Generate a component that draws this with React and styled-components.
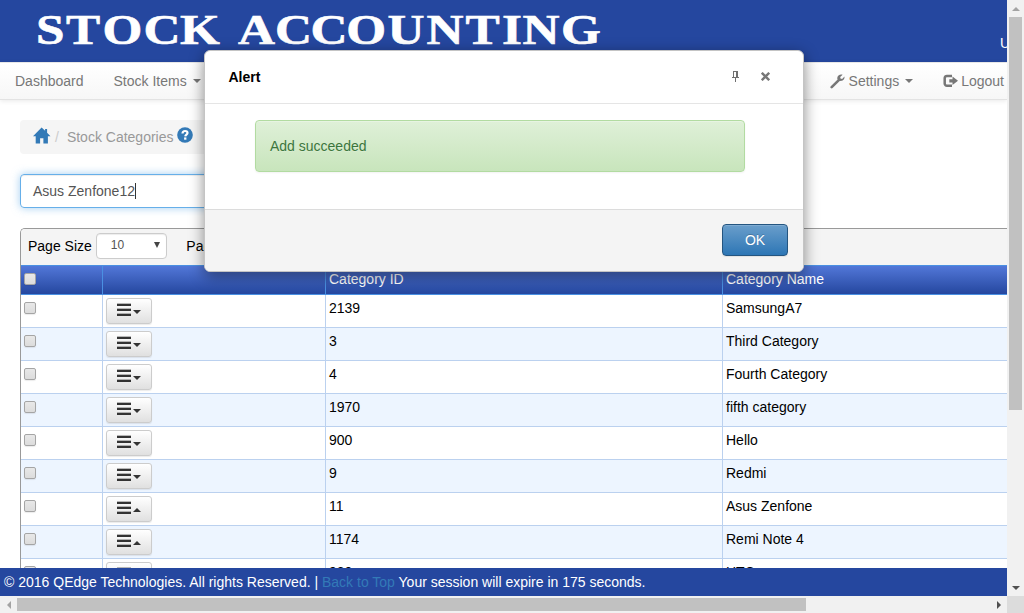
import React from "react";
import styled, { createGlobalStyle, css } from "styled-components";

const GlobalStyle = createGlobalStyle`
  * { box-sizing: border-box; }
  body { margin: 0; overflow: hidden; background: #fff; }
`;

const Screen = styled.div`
  position: relative;
  display: grid;
  grid-template-columns: 1007px 17px;
  grid-template-rows: 596px 17px;
  width: 1024px;
  height: 613px;
  overflow: hidden;
  font: 14px/20px "Liberation Sans", Arial, sans-serif;
  color: #000;
`;

const Page = styled.div`
  display: flex;
  flex-direction: column;
  min-width: 0;
  height: 596px;
  overflow: hidden;
  background: #fff;
`;

const Banner = styled.header`
  display: flex;
  justify-content: space-between;
  flex: none;
  height: 62px;
  background: #25479f;
  color: #fff;
`;

const Logo = styled.svg`
  display: block;
  flex: none;
  font: bold 42px "Liberation Serif", serif;
  fill: #fff;
  stroke: #fff;
  stroke-width: 0.6px;
`;

const UserLabel = styled.span`
  width: 7px;
  padding-top: 33px;
  overflow: hidden;
  white-space: nowrap;
`;

const Nav = styled.nav`
  display: flex;
  justify-content: space-between;
  flex: none;
  height: 38px;
  padding: 0 3px 0 15px;
  border-top: 1px solid #e7e7e7;
  border-bottom: 1px solid #e3e3e3;
  background: linear-gradient(#fff, #f7f7f7);
  box-shadow: 0 1px 5px rgba(0, 0, 0, 0.09);
  color: #777;
`;

const NavGroup = styled.div`
  display: flex;
  gap: 30px;
`;

const NavItem = styled.a`
  display: flex;
  align-items: center;
  height: 36px;
  gap: ${(p) => p.$gap || 6}px;
`;

const Caret = styled.i`
  width: 0;
  height: 0;
  border: 4px solid transparent;
  ${(p) =>
    p.$up
      ? css`border-top-width: 0; border-bottom-color: currentColor;`
      : css`border-bottom-width: 0; border-top-color: currentColor;`}
`;

const Content = styled.main`
  display: flex;
  flex-direction: column;
  flex: 1;
  min-height: 0;
  overflow: hidden;
  padding: 20px 0 0 20px;
`;

const Breadcrumb = styled.div`
  display: flex;
  align-items: center;
  flex: none;
  width: 400px;
  height: 34px;
  padding: 0 13px;
  border-radius: 4px;
  background: #f5f5f5;
  color: #999;

  > svg { margin-bottom: 4px; }
`;

const Slash = styled.span`
  padding: 0 8px 0 4px;
  color: #ccc;
`;

const HelpMark = styled.span`
  display: flex;
  padding: 0 0 4px 3px;
`;

const SearchBox = styled.div`
  display: flex;
  align-items: center;
  flex: none;
  width: 400px;
  height: 34px;
  margin: 20px 0;
  padding: 0 12px;
  border: 1px solid #66afe9;
  border-radius: 4px;
  box-shadow: inset 0 1px 1px rgba(0, 0, 0, 0.075), 0 0 8px rgba(102, 175, 233, 0.6);
  color: #555;
`;

const TextCursor = styled.i`
  width: 1px;
  height: 16px;
  background: #333;
`;

const Grid = styled.section`
  flex: none;
  border: 1px solid #999;
  border-width: 1px 0 0 1px;
  border-radius: 5px 0 0 0;
  overflow: hidden;
`;

const GridToolbar = styled.div`
  display: flex;
  align-items: center;
  height: 36px;
  padding: 0 7px 3px;
  background: #f4f4f4;
`;

const ToolLabel = styled.span`
  padding-top: 1px;
`;

const PageSize = styled.div`
  display: flex;
  align-items: center;
  justify-content: space-between;
  width: 71px;
  height: 26px;
  margin: 0 19.5px 0 4px;
  padding: 0 6px 2px 14px;
  border: 1px solid #ccc;
  border-radius: 4px;
  background: #fff;
  box-shadow: inset 0 1px 1px rgba(0, 0, 0, 0.075);
  font-size: 12px;
  color: #555;
`;

const SelectArrow = styled.i`
  width: 0;
  height: 0;
  border: solid transparent;
  border-width: 6px 3px 0;
  border-top-color: #444;
`;

const Row = styled.div`
  display: grid;
  grid-template-columns: 82px 223px 397px 1fr;
  height: ${(p) => (p.$head ? 30 : 33)}px;
  border-bottom: 1px solid ${(p) => (p.$head ? "#4a90e2" : "#bbd1ef")};
  color: ${(p) => (p.$head ? "#fff" : "#000")};
  background: ${(p) => (p.$alt ? "#edf5ff" : "#fff")};
  ${(p) =>
    p.$head &&
    css`
      border-top: 1px solid #4a90e2;
      background: linear-gradient(#5277d8, #25479f);
    `}
`;

const Cell = styled.div`
  display: flex;
  align-items: flex-start;
  padding: 3px 3px 0;
  border-right: ${(p) => (p.$last ? "0" : "1px")} solid ${(p) => (p.$head ? "#4a90e2" : "#bbd1ef")};
`;

const Check = styled.i`
  width: 12px;
  height: 12px;
  margin-top: 4px;
  border: 1px solid #a5a5a5;
  border-radius: 2px;
  background: linear-gradient(#e8e8e8, #dcdcdc);
  box-shadow: 0 1px 1px rgba(0, 0, 0, 0.08);
`;

const MenuButton = styled.button`
  display: flex;
  align-items: center;
  gap: 2px;
  width: 46px;
  height: 26px;
  margin: 0;
  padding: 0 0 3px 10px;
  border: 1px solid #ccc;
  border-radius: 3px;
  background: linear-gradient(#fff, #e0e0e0);
  box-shadow: 0 1px 1px rgba(0, 0, 0, 0.08);
  color: #333;

  ${Caret} { margin-top: 4px; }
`;

const Bars = styled.span`
  display: grid;
  gap: 2px;
  width: 14px;
  i {
    height: 3px;
    background: linear-gradient(#33333355 1px, #333 1px);
  }
`;

const Footer = styled.footer`
  flex: none;
  height: 28px;
  padding: 4px 4px 0;
  background: #25479f;
  color: #fff;
  white-space: nowrap;
`;

const FooterLink = styled.a`
  color: #337ab7;
`;

const Scrollbar = styled.div`
  display: flex;
  align-items: center;
  flex-direction: ${(p) => (p.$vertical ? "column" : "row")};
  background: #f1f1f1;
`;

const ScrollArrow = styled.span`
  display: flex;
  align-items: center;
  justify-content: center;
  width: 17px;
  height: 17px;
  color: ${(p) => (p.$off ? "#a3a3a3" : "#505050")};
`;

const Thumb = styled.span`
  flex: none;
  width: ${(p) => p.$w}px;
  height: ${(p) => p.$h}px;
  background: #c1c1c1;
`;

const Spacer = styled.span`
  flex: 1;
`;

const Corner = styled.div`
  background: #dcdcdc;
`;

const Dialog = styled.section`
  position: absolute;
  top: 50px;
  left: 204px;
  display: flex;
  flex-direction: column;
  width: 600px;
  height: 222px;
  border: 1px solid #c4c4c4;
  border-radius: 6px;
  overflow: hidden;
  background: #fff;
  box-shadow: 0 4px 15px rgba(0, 0, 0, 0.45);
`;

const DialogHeader = styled.div`
  display: flex;
  align-items: center;
  justify-content: space-between;
  height: 53px;
  padding: 0 33.5px 0 23.5px;
  border-bottom: 1px solid #e5e5e5;
  font-weight: bold;
`;

const DialogTools = styled.div`
  display: flex;
  align-items: center;
  gap: 20.5px;
  padding-bottom: 2px;
`;

const DialogBody = styled.div`
  flex: 1;
  padding: 16px 58px 0 50px;
`;

const Success = styled.div`
  display: flex;
  align-items: center;
  height: 52px;
  padding: 0 14px;
  border: 1px solid #b2dba1;
  border-radius: 4px;
  background: linear-gradient(#dff0d8, #c8e5bc);
  box-shadow: inset 0 1px 0 rgba(255, 255, 255, 0.25), 0 1px 2px rgba(0, 0, 0, 0.05);
  color: #3c763d;
  text-shadow: 0 1px 0 rgba(255, 255, 255, 0.2);
`;

const DialogFooter = styled.div`
  display: flex;
  justify-content: flex-end;
  height: 62px;
  padding: 14px 15px 0;
  border-top: 1px solid #dcdcdc;
  background: #f4f4f4;
`;

const OkButton = styled.button`
  width: 66px;
  height: 32px;
  padding: 0;
  border: 1px solid #245580;
  border-radius: 4px;
  background: linear-gradient(#6a9ecb, #2d76b5);
  box-shadow: inset 0 1px 0 rgba(255, 255, 255, 0.15), 0 1px 1px rgba(0, 0, 0, 0.075);
  font: 14px "Liberation Sans", Arial, sans-serif;
  color: #fff;
  text-shadow: 0 -1px 0 rgba(0, 0, 0, 0.2);
`;

const Home = () => (
  <svg width="18" height="17" viewBox="0 0 18 17" fill="#337ab7">
    <path d="M8.6.5 0 9.2h2.7V16.5h4.4v-5.2h3.3v5.2h4.5V9.2h2.6L14.1 5.7V2h-2v1.8z" />
  </svg>
);

const Help = () => (
  <svg width="16" height="16" viewBox="0 0 16 16">
    <circle cx="8" cy="8" r="7.8" fill="#337ab7" />
    <path d="M5.5 6.5C5.6 4.6 6.6 4 8.1 4c1.5 0 2.4.7 2.4 1.9 0 1.7-2.1 1.6-2.2 3.5" fill="none" stroke="#fff" strokeWidth="2.2" />
    <path d="M7.1 10.4h2.3v2.3H7.1z" fill="#fff" />
  </svg>
);

const Wrench = () => (
  <svg width="16" height="15" viewBox="0 0 16 15">
    <path d="M1.7 13.2 8.8 6.1" stroke="#777" strokeWidth="2.6" strokeLinecap="round" />
    <path d="M12.6.8 10.2 3.1l.3 1.5 1.6.3 2.4-2.3c.2 1.9-.5 3.3-1.9 4-1.3.6-2.6.5-3.7 0L7.4 5.3C7.1 4.1 7.4 2.6 8.5 1.6 9.6.6 11.2.2 12.6.8z" fill="#777" />
  </svg>
);

const Exit = () => (
  <svg width="15" height="14" viewBox="0 0 15 14">
    <path d="M9 1.9H4A2.2 2.2 0 0 0 1.7 4.1v5.4A2.2 2.2 0 0 0 4 11.7h5" fill="none" stroke="#777" strokeWidth="2.5" />
    <path d="M6.3 5.3h3.2V2.6L15 6.8l-5.5 4.3V8.5H6.3z" fill="#777" />
  </svg>
);

const Pin = () => (
  <svg width="8" height="11" viewBox="0 0 8 11" shapeRendering="crispEdges" fill="#707070">
    <path fillRule="evenodd" d="M1 0h5v6h1v1H4v4H3V7H0V6h1zM2 1v5h2V1z" />
  </svg>
);

const Close = () => (
  <svg width="9" height="9" viewBox="0 0 9 9" stroke="#777" strokeWidth="2.4">
    <path d="M.8.8l7.4 7.4M8.2.8.8 8.2" />
  </svg>
);

const Arrow = ({ d }) => (
  <svg width="8" height="8" viewBox="0 0 8 8" fill="currentColor">
    <path d={d} />
  </svg>
);

// The wordmark is set in extended capitals: stretched sideways, each letter on its own origin.
const STRETCH = 1.22;
const spread = (origins) => origins.map((x) => x / STRETCH).join(" ");

const categories = [
  ["2139", "SamsungA7"],
  ["3", "Third Category"],
  ["4", "Fourth Category"],
  ["1970", "fifth category"],
  ["900", "Hello"],
  ["9", "Redmi"],
  ["11", "Asus Zenfone", true],
  ["1174", "Remi Note 4", true],
  ["980", "HTC", true],
];

export default function App() {
  return (
    <>
      <GlobalStyle />
      <Screen>
        <Page>
          <Banner>
            <Logo width="640" height="62">
              <g transform={`scale(${STRETCH} 1)`}>
                <text y="43.6" x={spread([36, 66, 102.5, 143.5, 180])}>STOCK</text>
                <text y="43.6" x={spread([238, 275, 310.5, 346.2, 387.5, 426.5, 465.5, 502, 522.5, 561])}>ACCOUNTING</text>
              </g>
            </Logo>
            <UserLabel>User</UserLabel>
          </Banner>
          <Nav>
            <NavGroup>
              <NavItem>Dashboard</NavItem>
              <NavItem>Stock Items <Caret /></NavItem>
            </NavGroup>
            <NavGroup>
              <NavItem $gap={6}>
                <NavItem $gap={3}><Wrench />Settings</NavItem>
                <Caret />
              </NavItem>
              <NavItem $gap={3}><Exit />Logout</NavItem>
            </NavGroup>
          </Nav>
          <Content>
            <Breadcrumb>
              <Home /><Slash>/</Slash>Stock Categories
              <HelpMark><Help /></HelpMark>
            </Breadcrumb>
            <SearchBox>Asus Zenfone12<TextCursor /></SearchBox>
            <Grid>
              <GridToolbar>
                <ToolLabel>Page Size</ToolLabel>
                <PageSize>10<SelectArrow /></PageSize>
                <ToolLabel>Page</ToolLabel>
              </GridToolbar>
              <Row $head>
                <Cell $head><Check /></Cell>
                <Cell $head />
                <Cell $head>Category ID</Cell>
                <Cell $head $last>Category Name</Cell>
              </Row>
              {categories.map(([id, name, up], i) => (
                <Row key={id} $alt={i % 2 === 1}>
                  <Cell><Check /></Cell>
                  <Cell>
                    <MenuButton>
                      <Bars><i /><i /><i /></Bars>
                      <Caret $up={up} />
                    </MenuButton>
                  </Cell>
                  <Cell>{id}</Cell>
                  <Cell $last>{name}</Cell>
                </Row>
              ))}
            </Grid>
          </Content>
          <Footer>
            © 2016 QEdge Technologies. All rights Reserved. | <FooterLink>Back to Top</FooterLink> Your session will expire in 175 seconds.
          </Footer>
        </Page>
        <Scrollbar $vertical>
          <ScrollArrow $off><Arrow d="M4 2 8 6H0z" /></ScrollArrow>
          <Thumb $w={13} $h={393} />
          <Spacer />
          <ScrollArrow><Arrow d="M0 2h8L4 6z" /></ScrollArrow>
        </Scrollbar>
        <Scrollbar>
          <ScrollArrow $off><Arrow d="M6 0v8L2 4z" /></ScrollArrow>
          <Thumb $w={789} $h={13} />
          <Spacer />
          <ScrollArrow><Arrow d="M2 0 6 4 2 8z" /></ScrollArrow>
        </Scrollbar>
        <Corner />
        <Dialog>
          <DialogHeader>
            Alert
            <DialogTools><Pin /><Close /></DialogTools>
          </DialogHeader>
          <DialogBody><Success>Add succeeded</Success></DialogBody>
          <DialogFooter><OkButton>OK</OkButton></DialogFooter>
        </Dialog>
      </Screen>
    </>
  );
}
